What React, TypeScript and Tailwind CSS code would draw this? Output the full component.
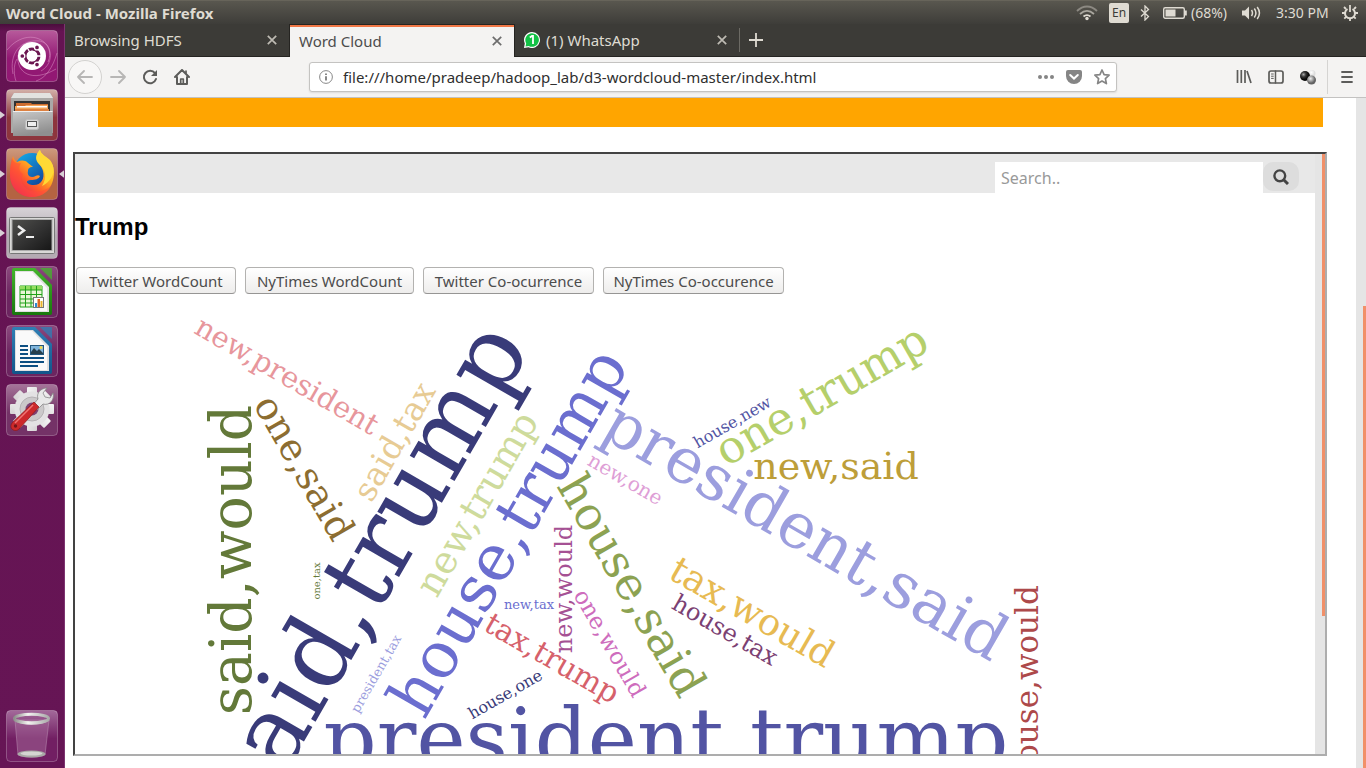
import type { ReactNode } from "react";

type Word = { text: string; size: number; x: number; y: number; rotate: number; fill: string };

const words: Word[] = [
  { text: "said,trump", size: 99, x: 320, y: 284, rotate: -60, fill: "#393b79" },
  { text: "president,trump", size: 83, x: 591, y: 467, rotate: 0, fill: "#5254a3" },
  { text: "house,trump", size: 64, x: 452, y: 243, rotate: -60, fill: "#6b6ecf" },
  { text: "president,said", size: 63, x: 720, y: 249, rotate: 30, fill: "#9c9ede" },
  { text: "said,would", size: 57, x: 176, y: 260, rotate: -90, fill: "#637939" },
  { text: "house,said", size: 46, x: 543, y: 293, rotate: 60, fill: "#8ca252" },
  { text: "one,trump", size: 45, x: 754, y: 108, rotate: -30, fill: "#b5cf6b" },
  { text: "new,trump", size: 38, x: 413, y: 210, rotate: -60, fill: "#cedb9c" },
  { text: "one,said", size: 38, x: 218, y: 174, rotate: 60, fill: "#8c6d31" },
  { text: "new,said", size: 38, x: 761, y: 179, rotate: 0, fill: "#bd9e39" },
  { text: "tax,would", size: 37, x: 671, y: 323, rotate: 30, fill: "#e7ba52" },
  { text: "said,tax", size: 33, x: 329, y: 147, rotate: -60, fill: "#e7cb94" },
  { text: "house,would", size: 31, x: 963, y: 384, rotate: -90, fill: "#ad494a" },
  { text: "tax,trump", size: 30, x: 472, y: 367, rotate: 30, fill: "#d6616b" },
  { text: "new,president", size: 29, x: 207, y: 84, rotate: 30, fill: "#e7969c" },
  { text: "house,tax", size: 24, x: 646, y: 337, rotate: 30, fill: "#7b4173" },
  { text: "new,would", size: 24, x: 497, y: 289, rotate: -90, fill: "#a55194" },
  { text: "one,would", size: 23, x: 528, y: 347, rotate: 60, fill: "#ce6dbd" },
  { text: "new,one", size: 20, x: 547, y: 185, rotate: 30, fill: "#de9ed6" },
  { text: "house,one", size: 16, x: 433, y: 399, rotate: -30, fill: "#393b79" },
  { text: "house,new", size: 16, x: 660, y: 127, rotate: -30, fill: "#5254a3" },
  { text: "new,tax", size: 13, x: 454, y: 309, rotate: 0, fill: "#6b6ecf" },
  { text: "president,tax", size: 13, x: 305, y: 376, rotate: -60, fill: "#9c9ede" },
  { text: "one,tax", size: 10, x: 245, y: 281, rotate: -90, fill: "#637939" },
];

function WordCloud() {
  return (
    <svg className="block h-full w-full" role="img" aria-label="Word cloud" fontFamily="'DejaVu Serif', serif">
      {words.map((w) => (
        <text key={w.text} textAnchor="middle" fontSize={w.size} fill={w.fill} transform={`translate(${w.x},${w.y}) rotate(${w.rotate})`}>
          {w.text}
        </text>
      ))}
    </svg>
  );
}

function Tile({ label, from, to, running, active, children }: { label: string; from: string; to: string; running?: boolean; active?: boolean; children: ReactNode }) {
  const id = `tile-${label.replace(/ /g, "-")}`;
  return (
    <button type="button" aria-label={label} className="flex w-full items-center">
      <svg viewBox="0 0 6 12" className="h-3 w-[6px] shrink-0">
        {running && <path d="M0 2.200L5 6L0 9.800Z" fill="#d8d0d6" />}
      </svg>
      <svg viewBox="0 0 52 52" className="h-[52px] w-[52px] shrink-0">
        <defs>
          <linearGradient id={id} x1="0" y1="0" x2="0" y2="1">
            <stop offset="0" stopColor={from} />
            <stop offset="0.55" stopColor={to} />
            <stop offset="1" stopColor={to} />
          </linearGradient>
        </defs>
        <rect x="0.5" y="0.5" width="51" height="51" rx="4" fill={`url(#${id})`} stroke="#fff" strokeOpacity="0.25" />
        {children}
      </svg>
      <svg viewBox="0 0 6 12" className="h-3 w-[6px] shrink-0">
        {active && <path d="M6 2.200L1 6L6 9.800Z" fill="#d8d0d6" />}
      </svg>
    </button>
  );
}

function LibreDoc({ edge, fold, id, children }: { edge: string; fold: string; id: string; children: ReactNode }) {
  return (
    <g>
      <defs>
        <linearGradient id={id} x1="0" y1="0" x2="0" y2="1">
          <stop offset="0" stopColor={fold} />
          <stop offset="1" stopColor={edge} />
        </linearGradient>
      </defs>
      <path d="M8 2h21l17 17v28a2 2 0 0 1-2 2H8a2 2 0 0 1-2-2V4a2 2 0 0 1 2-2z" fill={`url(#${id})`} />
      <path d="M9 5h18l16 16v25H9z" fill="#e0e0e0" />
      <path d="M10 6h16l15 16v23H10z" fill="#fafafa" />
      <path d="M34 2h11a1 1 0 0 1 1 1v11z" fill={fold} fillOpacity="0.75" />
      {children}
    </g>
  );
}

function Launcher() {
  return (
    <nav aria-label="Launcher" className="flex w-[65px] shrink-0 flex-col gap-[7px] border-r border-[#7d3470] bg-linear-to-b from-[#4b0d3d] from-0% via-[#651352] via-1% to-[#661555] pt-[6px] pb-[6px]">
      <Tile label="Search" from="#b75a9b" to="#921873">
        <g fill="none" stroke="#e7a5d3" strokeOpacity="0.45">
          <path d="M7 44C3 24 14 9 34 11c9 2 12 12 8 21" />
          <path d="M1 20C13 5 31 3 41 15c6 9 4 20-6 26" />
          <path d="M12 25c-2 18 14 28 38 14" />
          <path d="M10 51C8 46 7 35 11 29M30 51c10-3 17-14 21-28" />
        </g>
        <circle cx="26" cy="26" r="14" fill="#fff" />
        <circle cx="26" cy="26" r="7" fill="none" stroke="#6b1650" strokeWidth="3" />
        <g stroke="#fff" strokeWidth="1.300">
          <path d="M26 26h9M26 26l-4.600-8M26 26l-4.600 8" />
          <circle cx="16.300" cy="26" r="2.500" fill="#6b1650" />
          <circle cx="31" cy="17.400" r="2.500" fill="#6b1650" />
          <circle cx="31" cy="34.600" r="2.500" fill="#6b1650" />
        </g>
        <circle cx="26" cy="26" r="5.200" fill="#fff" />
      </Tile>
      <Tile label="Files" from="#d3b1a9" to="#8d353d" running>
        <defs>
          <linearGradient id="drawer" x1="0" y1="0" x2="0.300" y2="1">
            <stop offset="0" stopColor="#c9c9c9" />
            <stop offset="1" stopColor="#8f8f8f" />
          </linearGradient>
        </defs>
        <path d="M8 4h36l3 5v35H5V9z" fill="#aaa9a7" />
        <path d="M8 4h36l3 5H5z" fill="#e2e2e0" />
        <path d="M8 12h36v12H8z" fill="#333" />
        <path d="M10 14h15l1 1h16v8H10z" fill="#ce6d30" />
        <path d="M9 17h10l1-1h22v7H9z" fill="#f3a65a" />
        <path d="M11 17h30v1.500H11z" fill="#fff" />
        <path d="M9 20h34v2H9z" fill="#dd8141" />
        <path d="M7 22h39.500v25H7z" fill="url(#drawer)" />
        <path d="M7 22h39.500v1H7z" fill="#efefef" />
        <rect x="19.500" y="30.500" width="13" height="10" rx="2" fill="#d9d9d9" stroke="#bcbcbc" />
        <rect x="21.500" y="32.500" width="9" height="5" fill="#eee" stroke="#555" />
      </Tile>
      <Tile label="Firefox" from="#cd9a7e" to="#b46342" running active>
        <defs>
          <linearGradient id="fox" x1="0.900" y1="0.100" x2="0.200" y2="1">
            <stop offset="0" stopColor="#fff14a" />
            <stop offset="0.350" stopColor="#ffb51f" />
            <stop offset="0.650" stopColor="#ff5a2c" />
            <stop offset="1" stopColor="#e3195f" />
          </linearGradient>
          <linearGradient id="globe" x1="0" y1="0" x2="0.800" y2="1">
            <stop offset="0" stopColor="#14b2ef" />
            <stop offset="1" stopColor="#123b92" />
          </linearGradient>
        </defs>
        <circle cx="26" cy="23" r="18" fill="url(#globe)" />
        <path d="M7 8c1 3 2 5 4 6 4-2 8-2 11 1l5 4c-4 0-5 2-5 4-1 3 1 6 4 6 4 0 5-3 8-1-1 3-5 4-9 4-6 0-5 4 1 5 9 1 13-6 11-14-1-6-8-9-6-16 1-3 2-4 3-5 1 7 14 8 14 22 0 15-9 25-22 25S3 39 4 24C4 18 6 12 7 8z" fill="url(#fox)" />
        <path d="M34 2c-5 5-5 10-1 14 7 6 8 14 3 22 11-5 15-17 8-26-5-4-9-6-10-10z" fill="#ffda35" />
        <path d="M4 26c0 13 9 23 22 23 9 0 16-5 20-12-8 8-22 9-28 1-3-4-3-8-1-12-5-3-4-8-2-11-4 1-8-1-9-5-1 4-2 9-2 16z" fill="#ff493d" fillOpacity="0.500" />
      </Tile>
      <Tile label="Terminal" from="#d7d3d7" to="#b4abb3" running>
        <defs>
          <linearGradient id="screen" x1="0" y1="0" x2="1" y2="1">
            <stop offset="0" stopColor="#4f4f4c" />
            <stop offset="0.500" stopColor="#333" />
            <stop offset="1" stopColor="#161616" />
          </linearGradient>
        </defs>
        <rect x="3.500" y="10.500" width="45" height="36" rx="1" fill="#d9d9d7" stroke="#777" />
        <rect x="6" y="12.500" width="40" height="31" fill="url(#screen)" stroke="#aaa" />
        <path d="M12 19l6 4.500-6 4.500" fill="none" stroke="#eee" strokeWidth="2.500" />
        <path d="M20 30h8" stroke="#eee" strokeWidth="2" />
      </Tile>
      <Tile label="LibreOffice Calc" from="#8c4a7e" to="#6c2560">
        <LibreDoc edge="#18780d" fold="#43b52b" id="calc-doc">
          <path d="M14 20h22v21H14z" fill="#e8f6d5" stroke="#1fa018" />
          <path d="M14 20h22v4H14z" fill="#93dd61" />
          <path d="M14 24h22M14 28.500h22M14 33h22M14 37h22M19.500 20v21M25 20v21M30.500 20v21" fill="none" stroke="#1fa018" />
          <rect x="27.500" y="31.500" width="10" height="10" fill="#fff" stroke="#777" />
          <path d="M29 37h2v4h-2z" fill="#2f8ad0" />
          <path d="M31.500 33h2.500v8h-2.500z" fill="#df6722" />
          <path d="M34.500 35h2v6h-2z" fill="#eab42d" />
        </LibreDoc>
      </Tile>
      <Tile label="LibreOffice Writer" from="#8c4a7e" to="#6c2560">
        <LibreDoc edge="#12558a" fold="#2f7fb5" id="writer-doc">
          <path d="M14 21h8M14 25h8M14 29h8M14 33h24M14 37h24M14 41h18" fill="none" stroke="#0d4f82" strokeWidth="1.800" />
          <rect x="24.500" y="20.500" width="13" height="9" fill="#7fb5dd" stroke="#24577d" />
          <circle cx="35" cy="22.500" r="1.500" fill="#f4d84b" />
          <path d="M25 29v-2l3-4 3 3 2-2 4 4v1z" fill="#263f4c" />
        </LibreDoc>
      </Tile>
      <Tile label="System Settings" from="#a57599" to="#743267">
        <defs>
          <linearGradient id="gear-metal" x1="0" y1="0" x2="1" y2="1">
            <stop offset="0" stopColor="#f5f5f5" />
            <stop offset="1" stopColor="#d5d3d4" />
          </linearGradient>
        </defs>
        <g fill="url(#gear-metal)">
          {[0, 45, 90, 135].map((a) => (
            <rect key={a} x="21" y="3" width="10" height="44" rx="1" transform={`rotate(${a} 26 25)`} />
          ))}
        </g>
        <circle cx="26" cy="25" r="17.500" fill="#e3e2e3" />
        <circle cx="26" cy="25" r="12" fill="#cbc9ca" stroke="#b5b2b4" />
        <circle cx="26" cy="25" r="6.500" fill="#7e4273" />
        <path d="M32 15c-2-6 3-11 9-11l-4 5 2 4 5 1 3-5c2 7-4 13-10 11l-6 6-5-4z" fill="#e8e8e8" stroke="#888" strokeWidth="0.800" />
        <path d="M28 18l5 5-20 22c-2 2-5 2-7 0s-1-5 1-7z" fill="#cc292b" stroke="#8d1719" strokeWidth="0.700" />
        <path d="M27 21L9 39" stroke="#ef7775" strokeWidth="1.500" />
        <circle cx="9.500" cy="42" r="1.700" fill="#731619" />
      </Tile>
      <div className="mt-auto">
        <Tile label="Trash" from="#a3699a" to="#721f63">
          <defs>
            <linearGradient id="rim" x1="0" x2="1">
              <stop offset="0" stopColor="#8f8f8c" />
              <stop offset="0.400" stopColor="#f3f3f1" />
              <stop offset="1" stopColor="#aaa" />
            </linearGradient>
          </defs>
          <path d="M9 10l3 35c7 3 20 3 27 0l4-35z" fill="#aa71a0" fillOpacity="0.450" stroke="#bc91b4" strokeOpacity="0.500" />
          <ellipse cx="25.500" cy="44" rx="14" ry="3.500" fill="#a9a9a6" />
          <ellipse cx="25.500" cy="43.500" rx="11" ry="2" fill="#d5d5d2" />
          <ellipse cx="25.500" cy="8.500" rx="17" ry="4.200" fill="none" stroke="url(#rim)" strokeWidth="3" />
          <path d="M8 10c8 5 27 5 35 0" fill="none" stroke="url(#rim)" strokeWidth="2" />
        </Tile>
      </div>
    </nav>
  );
}

function SystemBar() {
  return (
    <header className="flex h-6 shrink-0 items-center border-t border-[#67645a] bg-linear-to-b from-[#59574f] to-[#3e3d39] pr-2 pl-[6px] text-[14px] text-[#dfdbd2]">
      <span className="text-[15px] leading-5 font-bold">Word Cloud - Mozilla Firefox</span>
      <div className="ml-auto flex items-center">
        <svg viewBox="0 0 22 16" className="mr-[11px] h-4 w-[22px]" fill="none" strokeWidth="1.800">
          <path d="M1 6c6-6 14-6 20 0" stroke="#8c8982" />
          <path d="M4 9c4.500-4 9.500-4 14 0" stroke="#aaa79f" />
          <path d="M7.500 11.500c2.500-2 4.500-2 7 0" stroke="#dfdbd2" />
          <circle cx="11" cy="13.500" r="1.700" fill="#dfdbd2" />
        </svg>
        <span className="mr-[10px] flex h-5 w-5 items-center justify-center rounded-[2px] bg-[#dfdbd2] text-[12px] text-[#3c3b37]">En</span>
        <svg viewBox="0 0 12 16" className="mr-3 h-4 w-3" fill="none" stroke="#dfdbd2" strokeWidth="1.300">
          <path d="M2 4.500l7.500 7L6 15V1l3.500 3.500-7.500 7" />
        </svg>
        <svg viewBox="0 0 24 14" className="mr-1 h-[14px] w-6">
          <rect x="0.700" y="1.700" width="20.600" height="10.600" rx="1.500" fill="none" stroke="#dfdbd2" strokeWidth="1.400" />
          <path d="M2.500 3.500h10v7h-10zM22 4.500h1.800v5H22z" fill="#dfdbd2" />
        </svg>
        <span className="mr-3 w-[38px] whitespace-nowrap">(68%)</span>
        <svg viewBox="0 0 20 16" className="mr-[15px] h-4 w-5" fill="none" stroke="#dfdbd2" strokeWidth="1.500">
          <path d="M1 5.500h3l4-4v13l-4-4H1z" fill="#dfdbd2" stroke="none" />
          <path d="M10.500 5c1.300 2 1.300 4 0 6M13.300 3.500c2.200 3 2.200 6 0 9M16.200 2c3 4 3 8 0 12" />
        </svg>
        <span className="mr-3 w-[54px] whitespace-nowrap">3:30 PM</span>
        <svg viewBox="0 0 16 16" className="h-4 w-4" fill="none" stroke="#dfdbd2">
          <path d="M5.500 4a5 5 0 1 0 5 0" strokeWidth="2" />
          <path d="M8 0v7" strokeWidth="1.800" />
          <path d="M13 8h3M0 8h3M8 13v3M11.700 11.700l2 2M4.300 11.700l-2 2M12 4l2-2M4 4L2 2" strokeWidth="1.800" />
        </svg>
      </div>
    </header>
  );
}

function CloseIcon() {
  return (
    <svg viewBox="0 0 10 10" className="h-[10px] w-[10px] opacity-80" fill="none" stroke="currentColor" strokeWidth="1.700">
      <path d="M0.800 0.800l8.400 8.400M9.200 0.800L0.800 9.200" />
    </svg>
  );
}

function Tab({ title, selected, icon }: { title: string; selected?: boolean; icon?: ReactNode }) {
  return (
    <div
      className={
        selected
          ? "flex w-[226px] items-center border-x border-[#252421] bg-[#f4f3f2] pr-3 pl-[9px] text-[#4c4c4c] shadow-[inset_0_1px_0_#252421,inset_0_3px_0_#f07746]"
          : "flex w-[224px] items-center border-b border-[#252421] pr-3 pl-[9px] text-[#dfdbd2]"
      }
    >
      {icon}
      <button type="button" role="tab" aria-selected={!!selected} className="text-[15px] leading-5">{title}</button>
      <button type="button" aria-label={`Close ${title}`} className="ml-auto"><CloseIcon /></button>
    </div>
  );
}

function TabStrip() {
  return (
    <div role="tablist" className="flex h-[33px] shrink-0 bg-[#3c3b37]">
      <Tab title="Browsing HDFS" />
      <Tab title="Word Cloud" selected />
      <Tab
        title="(1) WhatsApp"
        icon={
          <svg viewBox="0 0 16 16" className="mr-[6px] h-4 w-4 shrink-0" aria-hidden="true">
            <path d="M8 0a8 8 0 1 1-3.500 15.200L0 16l0.800-4.500A8 8 0 0 1 8 0z" fill="#fff" />
            <path d="M8 1.200a6.800 6.800 0 1 1-3.300 12.700L1.500 14.500l0.700-3.100A6.800 6.800 0 0 1 8 1.200z" fill="#12c145" />
            <path d="M5.800 5.500L8 4h1v8" fill="none" stroke="#fff" strokeWidth="1.800" />
          </svg>
        }
      />
      <div className="flex flex-1 items-center border-b border-[#252421]">
        <span className="h-6 w-px bg-[#6c6a64]" />
        <button type="button" aria-label="New tab" className="ml-[9px] text-[#dfdbd2]">
          <svg viewBox="0 0 14 14" className="h-[14px] w-[14px]" fill="none" stroke="currentColor" strokeWidth="1.800">
            <path d="M7 0v14M0 7h14" />
          </svg>
        </button>
      </div>
    </div>
  );
}

function ToolButton({ label, children }: { label: string; children: ReactNode }) {
  return (
    <button type="button" aria-label={label} className="flex h-8 w-8 shrink-0 items-center justify-center text-[#5c5c5a]">
      <svg viewBox="0 0 16 16" className="h-4 w-4" fill="none" stroke="currentColor" strokeWidth="2" strokeLinecap="round" strokeLinejoin="round">
        {children}
      </svg>
    </button>
  );
}

function Toolbar() {
  return (
    <div className="flex h-[41px] shrink-0 items-center border-b border-[#c3c2c1] bg-[#f4f3f2] px-[3px]">
      <button type="button" aria-label="Back" className="flex h-[34px] w-[34px] shrink-0 items-center justify-center rounded-full border border-[#d3d2d0] bg-[#f8f7f6] text-[#b7b6b5]">
        <svg viewBox="0 0 16 16" className="h-4 w-4" fill="none" stroke="currentColor" strokeWidth="1.800" strokeLinecap="round" strokeLinejoin="round">
          <path d="M15 8H1M7 2L1 8l6 6" />
        </svg>
      </button>
      <ToolButton label="Forward">
        <path d="M1 8h14M9 2l6 6-6 6" stroke="#b7b6b5" strokeWidth="1.800" />
      </ToolButton>
      <ToolButton label="Reload">
        <path d="M13 4.200A6.200 6.200 0 1 0 14 10" />
        <path d="M15 1v6H9z" fill="currentColor" stroke="none" />
      </ToolButton>
      <ToolButton label="Home">
        <path d="M1 8l7-7 7 7M3 8v7h10V8" />
        <path d="M6.700 14v-4h2.600v4M12 2v2" strokeWidth="1.700" />
      </ToolButton>
      <div className="mx-[111px] flex h-[30px] min-w-0 flex-1 items-center rounded-[3px] border border-[#c4c3c1] bg-white pr-[6px] pl-[9px] shadow-[0_1px_2px_#0000001a]">
        <svg viewBox="0 0 16 16" className="h-[14px] w-[14px] shrink-0" fill="none" stroke="#777">
          <circle cx="8" cy="8" r="7.300" />
          <path d="M8 7v5M8 4v1.800" strokeWidth="2" />
        </svg>
        <input aria-label="Address" defaultValue="file:///home/pradeep/hadoop_lab/d3-wordcloud-master/index.html" className="ml-[10px] min-w-0 flex-1 bg-transparent text-[15px] leading-5 text-[#2f2f2f] outline-none" />
        <div className="flex items-center gap-3 text-[#858585]">
          <svg viewBox="0 0 16 16" className="h-4 w-4" fill="currentColor">
            <circle cx="2" cy="8" r="2" /><circle cx="8" cy="8" r="2" /><circle cx="14" cy="8" r="2" />
          </svg>
          <svg viewBox="0 0 16 16" className="h-4 w-4">
            <path d="M2 1h12a2 2 0 0 1 2 2v4a8 8 0 0 1-16 0V3a2 2 0 0 1 2-2z" fill="currentColor" />
            <path d="M4.200 6L8 9.600 11.800 6" fill="none" stroke="#fff" strokeWidth="2" strokeLinecap="round" />
          </svg>
          <svg viewBox="0 0 16 16" className="h-4 w-4" fill="none" stroke="currentColor" strokeWidth="1.700" strokeLinejoin="round">
            <path d="M8 1l2.100 4.600 5 .6-3.700 3.400 1 5L8 12.100l-4.400 2.500 1-5L.9 6.200l5-.6z" />
          </svg>
        </div>
      </div>
      <ToolButton label="Library">
        <path d="M1.500 1v13M5.300 1v13M9 1v13M11 2l4 12" strokeLinecap="butt" strokeWidth="1.700" />
      </ToolButton>
      <ToolButton label="Sidebars">
        <rect x="1" y="2" width="14" height="12" rx="2" strokeWidth="1.700" />
        <path d="M7.500 2v12" strokeWidth="1.500" />
        <path d="M3.500 5h1.800M3.500 7.200h1.800M3.500 9.400h1.800" strokeWidth="1" />
      </ToolButton>
      <ToolButton label="Extension">
        <defs>
          <radialGradient id="ball-dark" cx="0.350" cy="0.350"><stop offset="0" stopColor="#aaa" /><stop offset="0.500" stopColor="#333" /><stop offset="1" stopColor="#080808" /></radialGradient>
          <radialGradient id="ball-grey" cx="0.400" cy="0.350"><stop offset="0" stopColor="#eee" /><stop offset="1" stopColor="#626262" /></radialGradient>
          <radialGradient id="ball-white" cx="0.400" cy="0.350"><stop offset="0" stopColor="#fff" /><stop offset="1" stopColor="#ddd" /></radialGradient>
        </defs>
        <circle cx="12" cy="4.500" r="3.500" fill="url(#ball-white)" stroke="none" />
        <circle cx="5" cy="7" r="5" fill="url(#ball-dark)" stroke="none" />
        <circle cx="11.500" cy="11" r="4.500" fill="url(#ball-grey)" stroke="none" />
      </ToolButton>
      <span className="mr-[3px] ml-[3px] h-[34px] w-px shrink-0 bg-[#d5d4d2]" />
      <ToolButton label="Menu">
        <path d="M3 3h10M3 8h10M3 13h10" strokeWidth="1.800" />
      </ToolButton>
    </div>
  );
}

const buttons = [
  { label: "Twitter WordCount", width: "w-[160px]" },
  { label: "NyTimes WordCount", width: "w-[169px]" },
  { label: "Twitter Co-ocurrence", width: "w-[171px]" },
  { label: "NyTimes Co-occurence", width: "w-[181px]" },
];

function CloudFrame() {
  return (
    <section className="mt-[25px] mr-[29px] mb-3 ml-2 flex min-h-0 flex-1 border-2 border-t-[#434343] border-r-[#adadad] border-b-[#adadad] border-l-[#434343]">
      <div className="flex min-h-0 min-w-0 flex-1 flex-col">
        <form className="flex h-[39px] shrink-0 items-start justify-end bg-[#e8e8e8] pt-2 pr-4" onSubmit={(e) => e.preventDefault()}>
          <input type="text" aria-label="Search" placeholder="Search.." className="h-[31px] w-[268px] bg-white px-[6px] text-[16px] outline-none placeholder:text-[#999]" />
          <button type="submit" aria-label="Submit search" className="flex h-[29px] w-9 items-center justify-center rounded-[10px] bg-[#ddd]">
            <svg viewBox="0 0 16 16" className="h-4 w-4" fill="none" stroke="#444" strokeWidth="2.400">
              <circle cx="6.800" cy="6.800" r="5.400" />
              <path d="M10.700 10.700l4.300 4.300" strokeWidth="3" />
            </svg>
          </button>
        </form>
        <h2 className="mt-5 h-7 shrink-0 font-['Liberation_Sans',sans-serif] text-[24px] leading-7 font-bold text-black">Trump</h2>
        <div className="mt-[26px] ml-px flex shrink-0 gap-[9px]">
          {buttons.map((b) => (
            <button key={b.label} type="button" className={`${b.width} h-[27px] rounded-[4px] border border-[#b3b2b0] border-b-[#969594] bg-linear-to-b from-white to-[#eeedec] text-[15px] leading-5 whitespace-nowrap text-[#4c4c4c]`}>
              {b.label}
            </button>
          ))}
        </div>
        <div className="mt-[6px] min-h-0 flex-1 overflow-hidden">
          <WordCloud />
        </div>
      </div>
      <div className="flex w-[10px] shrink-0 justify-end bg-[#e5e5e5]">
        <div className="h-[77%] w-[3px] bg-[#f19069]" />
      </div>
    </section>
  );
}

export default function App() {
  return (
    <div className="flex h-screen flex-col overflow-hidden bg-white font-['Noto_Sans',sans-serif]">
      <SystemBar />
      <div className="flex min-h-0 flex-1">
        <Launcher />
        <div className="flex min-w-0 flex-1 flex-col">
          <TabStrip />
          <Toolbar />
          <div className="flex min-h-0 flex-1">
            <main className="flex min-w-0 flex-1 flex-col">
              <div className="mx-[33px] h-[29px] shrink-0 bg-[#ffa500]" />
              <CloudFrame />
            </main>
            <div className="flex w-[10px] shrink-0 items-end justify-end bg-[#e5e5e5]">
              <div className="h-[69%] w-[3px] bg-[#f19069]" />
            </div>
          </div>
        </div>
      </div>
    </div>
  );
}
